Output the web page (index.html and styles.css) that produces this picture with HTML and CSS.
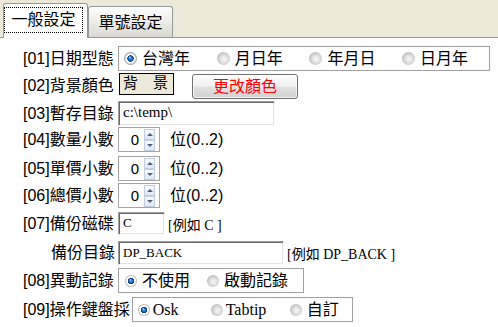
FILE: index.html
```html
<!DOCTYPE html>
<html>
<head>
<meta charset="utf-8">
<link rel="stylesheet" href="styles.css">
</head>
<body>
<div class="tabs">
  <div class="tab active"><span class="focus">一般設定</span></div>
  <div class="tab">單號設定</div>
</div>
<div class="content">
  <div class="row h27">
    <div class="label">[01]日期型態</div>
    <div class="group date">
      <span class="opt"><i class="radio on"></i>台灣年</span>
      <span class="opt"><i class="radio"></i>月日年</span>
      <span class="opt"><i class="radio"></i>年月日</span>
      <span class="opt"><i class="radio"></i>日月年</span>
    </div>
  </div>
  <div class="row h28">
    <div class="label lh22">[02]背景顏色</div>
    <div class="swatch">背　景</div>
    <div class="btn">更改顏色</div>
  </div>
  <div class="row h26">
    <div class="label">[03]暫存目錄</div>
    <div class="input path">c:\temp\</div>
  </div>
  <div class="row h29">
    <div class="label">[04]數量小數</div>
    <div class="spin"><span class="num">0</span><span class="btns"><i class="up"></i><i class="down"></i></span></div>
    <div class="unit">位(0..2)</div>
  </div>
  <div class="row h27">
    <div class="label">[05]單價小數</div>
    <div class="spin"><span class="num">0</span><span class="btns"><i class="up"></i><i class="down"></i></span></div>
    <div class="unit">位(0..2)</div>
  </div>
  <div class="row h29">
    <div class="label">[06]總價小數</div>
    <div class="spin"><span class="num">0</span><span class="btns"><i class="up"></i><i class="down"></i></span></div>
    <div class="unit">位(0..2)</div>
  </div>
  <div class="row h29">
    <div class="label lh23">[07]備份磁碟</div>
    <div class="input drive">C</div>
    <div class="hint">[例如 C ]</div>
  </div>
  <div class="row h27">
    <div class="label lh24 right">備份目錄</div>
    <div class="input dir">DP_BACK</div>
    <div class="hint">[例如 DP_BACK ]</div>
  </div>
  <div class="row h29">
    <div class="label">[08]異動記錄</div>
    <div class="group log">
      <span class="opt w82"><i class="radio sm on"></i>不使用</span>
      <span class="opt"><i class="radio sm"></i>啟動記錄</span>
    </div>
  </div>
  <div class="row h29">
    <div class="label auto">[09]操作鍵盤採</div>
    <div class="group kbd">
      <span class="opt w73 serif"><i class="radio sm on"></i>Osk</span>
      <span class="opt w79 serif"><i class="radio sm"></i>Tabtip</span>
      <span class="opt"><i class="radio sm"></i>自訂</span>
    </div>
  </div>
</div>
</body>
</html>
```

FILE: styles.css
```css
* { box-sizing: border-box; }
html, body { margin: 0; padding: 0; }
body {
  width: 498px;
  height: 327px;
  overflow: hidden;
  background: #fff;
  color: #000;
  font-family: "Liberation Sans", "Noto Sans CJK TC", sans-serif;
  font-size: 16px;
}

/* tabs */
.tabs {
  height: 38px;
  background: #ece9d8;
  border-bottom: 1px solid #919b9c;
  display: flex;
  align-items: flex-end;
  padding-left: 3px;
}
.tab {
  width: 85px;
  height: 31px;
  border: 1px solid #919b9c;
  border-bottom: none;
  border-radius: 3px 3px 0 0;
  background: linear-gradient(#fdfdfc, #efeee9 45%, #d9d8d2);
  text-align: center;
  line-height: 30px;
  padding-top: 1px;
  white-space: nowrap;
}
.tab.active {
  height: 35px;
  margin-bottom: -1px;
  background: #fff;
  padding: 3px 0 0 0;
  text-align: left;
}
.focus {
  display: block;
  width: 79px;
  height: 26px;
  border: 1px dotted #000;
  line-height: 24px;
  text-align: center;
}

/* rows */
.content { padding: 8px 0 0 23px; }
.row { display: flex; align-items: flex-start; }
.h26 { height: 26px; }
.h27 { height: 27px; }
.h28 { height: 28px; }
.h29 { height: 29px; }

.label {
  width: 95px;
  flex-shrink: 0;
  line-height: 25px;
  white-space: nowrap;
}
.label.lh22 { line-height: 22px; padding-top: 2px; }
.label.lh23 { line-height: 23px; }
.label.lh24 { line-height: 24px; }
.label.right { text-align: right; padding-right: 3px; }
.label.auto { width: auto; margin-right: 2px; }

/* radio groups */
.group {
  height: 25px;
  border: 1px solid #a0a0a0;
  display: flex;
  align-items: center;
}
.date { width: 372px; padding-left: 5px; }
.date .opt { width: 92.7px; }
.log { width: 186px; padding-left: 6px; }
.kbd { width: 221px; padding-left: 5px; }
.w82 { width: 82px; }
.w73 { width: 73px; }
.w79 { width: 79px; }
.opt {
  display: flex;
  align-items: center;
  white-space: nowrap;
  flex-shrink: 0;
  line-height: 20px;
}
.serif { font-family: "Liberation Serif", "Noto Sans CJK TC", serif; }
.serif .radio { margin-right: 3px; }

.radio {
  display: inline-block;
  width: 13px;
  height: 13px;
  flex-shrink: 0;
  margin-right: 5px;
  border-radius: 50%;
  background: radial-gradient(circle at 55% 55%, #f6f6f6 0, #e6e6e6 30%, #c8c8c8 62%, #a4a4a4 85%, #8e8e8e 100%);
}
.radio.on {
  background:
    radial-gradient(circle at 44% 40%, rgba(255,255,255,.85) 0, rgba(255,255,255,0) 1.3px),
    radial-gradient(circle at 50% 50%, #4fa3e6 0, #1f6cc0 1.8px, #0b3b78 3px, #fff 3.4px, #fff 4.3px, #dedede 5px, #a8a8a8 6px, #8e8e8e 7px);
}
.radio.sm { width: 12px; height: 12px; }

/* swatch and button */
.swatch {
  width: 55px;
  height: 22px;
  margin-left: 1px;
  border: 1px solid #000;
  background: #ece9d8;
  font-size: 15px;
  line-height: 16px;
  padding: 1px 0 0 3px;
  white-space: nowrap;
}
.btn {
  width: 106px;
  height: 25px;
  margin: 1px 0 0 18px;
  border: 1px solid #707070;
  border-radius: 3px;
  background: linear-gradient(#fdfdfd, #f1f1f1 45%, #e0e0e0 55%, #d2d2d2);
  box-shadow: inset 0 0 0 1px rgba(255,255,255,.7);
  color: #f00;
  text-align: center;
  line-height: 23px;
}

/* text inputs */
.input {
  height: 25px;
  border: 1px solid;
  border-color: #a0a0a0 #fff #fff #a0a0a0;
  box-shadow: inset 1px 1px 0 #696969, inset -1px -1px 0 #e3e3e3;
  font-family: "Liberation Serif", "Noto Sans CJK TC", serif;
  padding: 2px 0 0 4px;
  line-height: 17px;
  white-space: nowrap;
}
.path { width: 157px; font-size: 15px; }
.drive { width: 47px; height: 23px; font-size: 13px; padding-top: 1px; }
.dir { width: 166px; height: 24px; font-size: 13px; }

.hint {
  font-family: "Liberation Serif", "Noto Sans CJK TC", serif;
  font-size: 14px;
  margin-left: 3px;
  line-height: 23px;
  padding-top: 2px;
  white-space: nowrap;
}

/* numeric up-down */
.spin {
  width: 42px;
  height: 25px;
  border: 1px solid #a5a5a5;
  display: flex;
  align-items: center;
  padding-right: 4px;
}
.num {
  flex: 1;
  text-align: right;
  padding-right: 5px;
  font-size: 15px;
  line-height: 20px;
}
.btns { display: flex; flex-direction: column; }
.btns i {
  display: block;
  width: 11px;
  height: 11px;
  border: 1px solid #c2cde0;
  background: linear-gradient(#f8fafd, #e0e8f4);
  position: relative;
}
.btns i::after {
  content: "";
  position: absolute;
  left: 2px;
  top: 3px;
  border-left: 3px solid transparent;
  border-right: 3px solid transparent;
}
.btns .up::after { border-bottom: 3px solid #4d6185; }
.btns .down::after { border-top: 3px solid #4d6185; }

.unit {
  margin-left: 10px;
  line-height: 25px;
  white-space: nowrap;
}
```
